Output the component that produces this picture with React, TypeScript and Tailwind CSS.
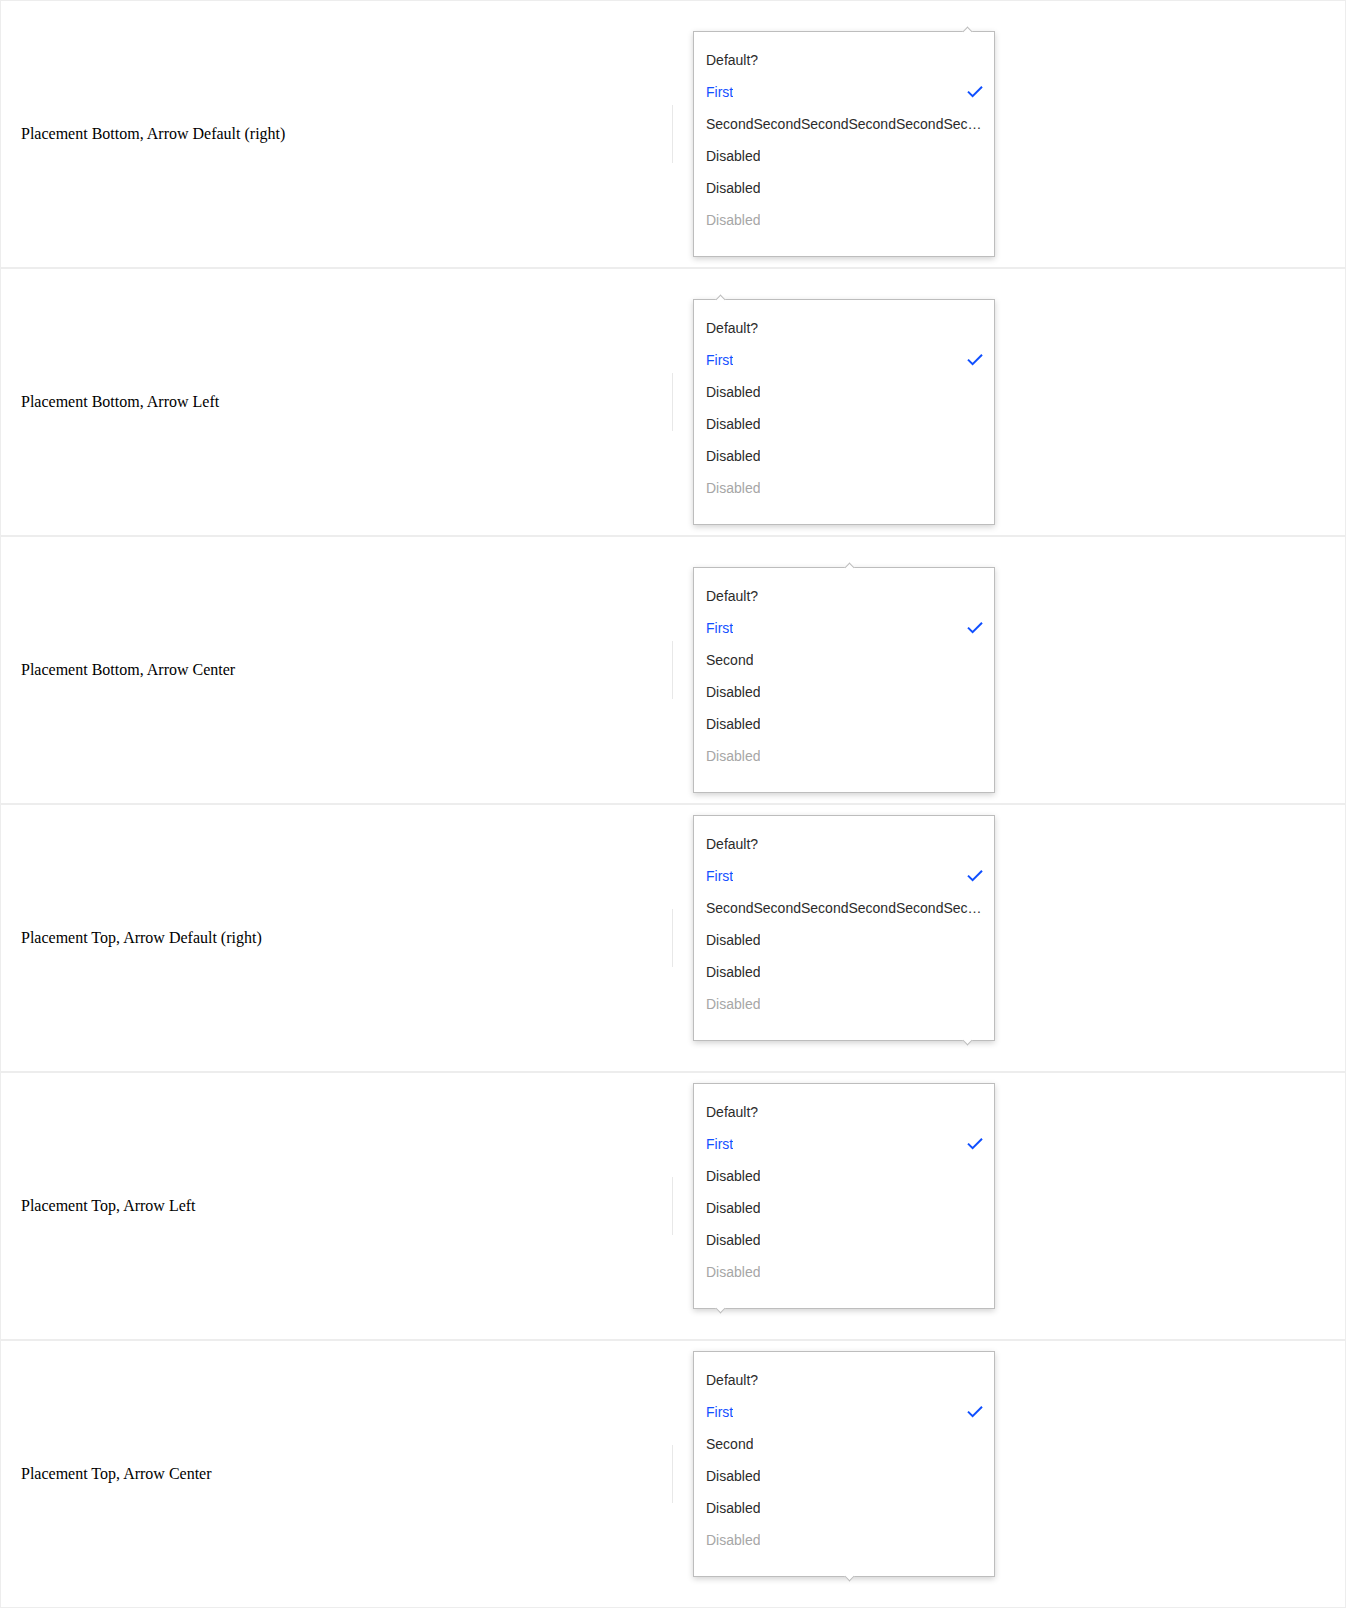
import React from 'react';

type Item = { label: string; state: 'normal' | 'selected' | 'disabled' };

const longSecond = 'Second'.repeat(10);

const itemsLong: Item[] = [
  { label: 'Default?', state: 'normal' },
  { label: 'First', state: 'selected' },
  { label: longSecond, state: 'normal' },
  { label: 'Disabled', state: 'normal' },
  { label: 'Disabled', state: 'normal' },
  { label: 'Disabled', state: 'disabled' },
];

const itemsLeft: Item[] = [
  { label: 'Default?', state: 'normal' },
  { label: 'First', state: 'selected' },
  { label: 'Disabled', state: 'normal' },
  { label: 'Disabled', state: 'normal' },
  { label: 'Disabled', state: 'normal' },
  { label: 'Disabled', state: 'disabled' },
];

const itemsCenter: Item[] = [
  { label: 'Default?', state: 'normal' },
  { label: 'First', state: 'selected' },
  { label: 'Second', state: 'normal' },
  { label: 'Disabled', state: 'normal' },
  { label: 'Disabled', state: 'normal' },
  { label: 'Disabled', state: 'disabled' },
];

type Row = {
  title: string;
  placement: 'bottom' | 'top';
  arrow: 'right' | 'left' | 'center';
  items: Item[];
};

const rows: Row[] = [
  { title: 'Placement Bottom, Arrow Default (right)', placement: 'bottom', arrow: 'right', items: itemsLong },
  { title: 'Placement Bottom, Arrow Left', placement: 'bottom', arrow: 'left', items: itemsLeft },
  { title: 'Placement Bottom, Arrow Center', placement: 'bottom', arrow: 'center', items: itemsCenter },
  { title: 'Placement Top, Arrow Default (right)', placement: 'top', arrow: 'right', items: itemsLong },
  { title: 'Placement Top, Arrow Left', placement: 'top', arrow: 'left', items: itemsLeft },
  { title: 'Placement Top, Arrow Center', placement: 'top', arrow: 'center', items: itemsCenter },
];

const Check = () => (
  <svg width="16" height="12" viewBox="0 0 16 12" className="shrink-0 mr-[-1px]">
    <path d="M1 5.6 L5.6 10.2 L15 0.8" fill="none" stroke="#0f4fff" strokeWidth="2" />
  </svg>
);

const Arrow = ({ placement, arrow }: { placement: Row['placement']; arrow: Row['arrow'] }) => {
  const horiz = arrow === 'right' ? 'left-[270px]' : arrow === 'left' ? 'left-[23px]' : 'left-[152px]';
  const vert =
    placement === 'bottom'
      ? 'top-[-4px] border-l border-t'
      : 'bottom-[-4px] border-r border-b';
  return (
    <div className={`absolute w-[7px] h-[7px] rotate-45 bg-white border-[#bdbdbd] ${vert} ${horiz}`} />
  );
};

const Menu = ({ row }: { row: Row }) => (
  <div
    className={`relative ml-5 w-[302px] bg-white border border-[#bdbdbd] shadow-[0_2px_6px_rgba(0,0,0,0.18)] pt-3 pb-5 ${
      row.placement === 'bottom' ? 'self-start mt-[30px]' : 'self-end mb-[30px]'
    }`}
  >
    <Arrow placement={row.placement} arrow={row.arrow} />
    {row.items.map((item, i) => (
      <div key={i} className="h-8 flex items-center justify-between px-3 gap-2">
        <span
          className={`truncate text-[14px] ${
            item.state === 'selected'
              ? 'text-[#1450ff]'
              : item.state === 'disabled'
              ? 'text-[#a6a6a6]'
              : 'text-[#2b2b2b]'
          }`}
        >
          {item.label}
        </span>
        {item.state === 'selected' && <Check />}
      </div>
    ))}
  </div>
);

export default function App() {
  return (
    <div className="w-[1346px] bg-white" style={{ fontFamily: '"Liberation Sans", Arial, sans-serif' }}>
      {rows.map((row, i) => (
        <div key={i} className="h-[268px] border border-[#ededed] flex">
          <div
            className="w-[671px] flex items-center pl-5 text-[16px] text-black"
            style={{ fontFamily: '"Liberation Serif", "Times New Roman", serif' }}
          >
            {row.title}
          </div>
          <div className="self-center w-px h-[58px] bg-[#e8e8e8]" />
          <Menu row={row} />
        </div>
      ))}
    </div>
  );
}
